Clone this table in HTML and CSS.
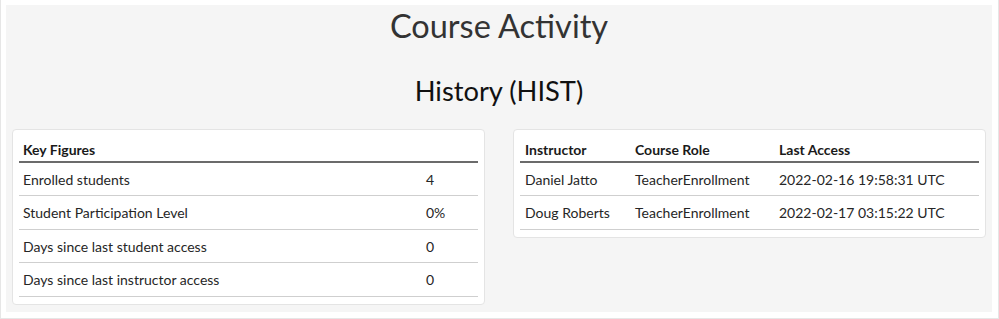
FILE: index.html
```html
<!DOCTYPE html>
<html>
<head>
<meta charset="utf-8">
<link rel="stylesheet" href="styles.css">
</head>
<body>
<div class="frame">
  <div class="panel">
    <h1 class="title">Course Activity</h1>
    <h2 class="subtitle">History (HIST)</h2>
    <div class="cards">
      <div class="card">
        <table class="tbl key">
          <thead>
            <tr><th class="c-label">Key Figures</th><th class="c-val"></th></tr>
          </thead>
          <tbody>
            <tr><td>Enrolled students</td><td>4</td></tr>
            <tr><td>Student Participation Level</td><td>0%</td></tr>
            <tr><td>Days since last student access</td><td>0</td></tr>
            <tr><td>Days since last instructor access</td><td>0</td></tr>
          </tbody>
        </table>
      </div>
      <div class="card">
        <table class="tbl inst">
          <thead>
            <tr><th class="c-name">Instructor</th><th class="c-role">Course Role</th><th>Last Access</th></tr>
          </thead>
          <tbody>
            <tr><td>Daniel Jatto</td><td>TeacherEnrollment</td><td>2022-02-16 19:58:31 UTC</td></tr>
            <tr><td>Doug Roberts</td><td>TeacherEnrollment</td><td>2022-02-17 03:15:22 UTC</td></tr>
          </tbody>
        </table>
      </div>
    </div>
  </div>
</div>
</body>
</html>
```
FILE: styles.css
```css
html, body {
  margin: 0;
  padding: 0;
  background: #ffffff;
}
body {
  font-family: Lato, "Liberation Sans", sans-serif;
  color: #2d2d2d;
}
.frame {
  width: 999px;
  height: 319px;
  box-sizing: border-box;
  padding: 5px 6px 7px 5px;
  border-left: 1px solid #e6e6e6;
  border-right: 1px solid #e6e6e6;
  border-bottom: 1px solid #e6e6e6;
}
.panel {
  background: #f5f5f5;
  height: 307px;
  box-sizing: border-box;
  padding: 0 6px;
}
.title {
  margin: 0;
  padding-top: 1px;
  text-align: center;
  font-size: 32.5px;
  font-weight: 400;
  line-height: 40px;
  color: #333333;
}
.subtitle {
  margin: 0;
  padding-top: 28px;
  text-align: center;
  font-size: 27.3px;
  font-weight: 400;
  line-height: 34px;
  color: #111111;
}
.cards {
  display: flex;
  gap: 28px;
  align-items: flex-start;
  margin-top: 21px;
}
.card {
  flex: 0 0 473px;
  box-sizing: border-box;
  background: #ffffff;
  border: 1px solid #e4e4e4;
  border-radius: 4px;
  padding: 6px 6px 7px 6px;
}
.tbl {
  width: 100%;
  border-collapse: collapse;
  font-size: 14px;
  line-height: 17.5px;
  color: #262626;
}
.tbl th {
  text-align: left;
  font-weight: 700;
  padding: 5px 4px 2px 4px;
  border-bottom: 2px solid #6b6b6b;
  color: #1a1a1a;
}
.tbl td {
  text-align: left;
  padding: 8px 4px 7px 4px;
  border-bottom: 1px solid #cfcfcf;
}
.inst th, .inst td { padding-left: 5px; }
.key .c-val { width: 48px; }
.inst .c-name { width: 101px; }
.inst .c-role { width: 135px; }
```
